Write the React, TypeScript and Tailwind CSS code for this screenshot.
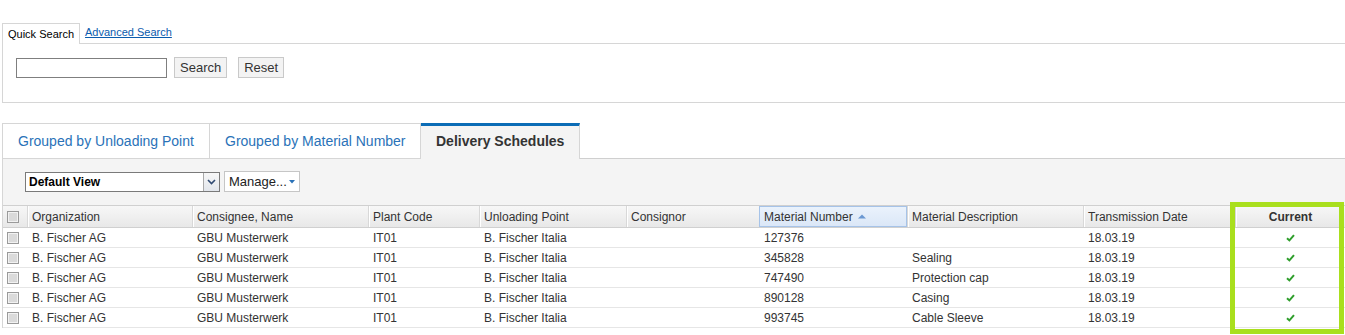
import React from 'react';

const rows = [
  { mat: '127376', desc: '' },
  { mat: '345828', desc: 'Sealing' },
  { mat: '747490', desc: 'Protection cap' },
  { mat: '890128', desc: 'Casing' },
  { mat: '993745', desc: 'Cable Sleeve' },
];

const cols = 'grid grid-cols-[24px_165px_176px_111px_147px_133px_148px_176px_152px_1fr]';

const Checkbox = () => (
  <span className="block w-[12px] h-[12px] border border-[#9a9a9a] bg-[#dadada] shadow-[inset_0_0_0_1px_#f2f2f2]" />
);

const Check = () => (
  <svg width="9" height="8" viewBox="0 0 9 8" className="block">
    <path d="M1 4.2 L3.4 6.4 L8 1.2" fill="none" stroke="#2f9e2c" strokeWidth="2" />
  </svg>
);

const HeadCell: React.FC<{ children?: React.ReactNode; className?: string }> = ({ children, className = '' }) => (
  <div className={`h-full border-l border-[#d8d8d8] shadow-[inset_1px_0_0_#ffffff] px-[4px] flex items-center truncate ${className}`}>
    {children}
  </div>
);

export default function App() {
  return (
    <div className="w-[1345px] h-[335px] overflow-hidden bg-white relative text-[#333] font-['Liberation_Sans',Arial,sans-serif]">
      {/* Search box */}
      <div className="pt-[23px] pl-[2px]">
        <div className="flex">
          <div className="h-[21px] border-x border-t border-[#d6d6d6] px-[5px] text-[11px] leading-[20px] text-black">
            Quick Search
          </div>
          <div className="flex-1 h-[21px] border-b border-[#d6d6d6] pl-[5px] text-[11px] leading-[19px]">
            <span className="text-[#0b5cad] underline">Advanced Search</span>
          </div>
        </div>
        <div className="h-[59px] border-l border-b border-[#d6d6d6] pt-[14px] pl-[13px] flex items-start">
          <input className="w-[151px] h-[20px] border border-[#7f7f7f] bg-white outline-none" />
          <button className="ml-[7px] -mt-px h-[21px] px-[5px] border border-[#c9c9c9] bg-[#f3f3f3] text-[13px] leading-[20px] text-[#333]">
            Search
          </button>
          <button className="ml-[11px] -mt-px h-[21px] px-[5px] border border-[#c9c9c9] bg-[#f3f3f3] text-[13px] leading-[20px] text-[#333]">
            Reset
          </button>
        </div>
      </div>

      {/* Result tabs */}
      <div className="mt-[20px] pl-[2px]">
        <div className="flex h-[36px] text-[14px]">
          <div className="w-[208px] border border-[#d6d6d6] pl-[15px] flex items-center text-[#2a72b8]">
            Grouped by Unloading Point
          </div>
          <div className="w-[211px] border-y border-r border-[#d6d6d6] pl-[15px] flex items-center text-[#2a72b8]">
            Grouped by Material Number
          </div>
          <div className="w-[159px] border-t-[3px] border-t-[#0b6cb6] border-r border-r-[#d6d6d6] bg-[#f4f4f4] pl-[15px] pb-[2px] flex items-center font-bold text-[#333]">
            Delivery Schedules
          </div>
          <div className="flex-1 border-b border-[#cfcfcf]" />
        </div>

        {/* Toolbar */}
        <div className="h-[46px] bg-[#f4f4f4] border-l border-[#d6d6d6] pt-[13px] pl-[22px] flex items-start">
          <div className="flex h-[20px] w-[195px] border border-[#7a7a7a] bg-white">
            <span className="flex-1 pl-[3px] text-[12px] leading-[19px] font-bold text-black">Default View</span>
            <span className="w-[16px] border-l border-[#a9a9a9] bg-gradient-to-b from-[#f7f7f7] to-[#e2e6ec] flex items-center justify-center">
              <svg width="9" height="6" viewBox="0 0 9 6">
                <path d="M1 1 L4.5 4.5 L8 1" fill="none" stroke="#2f4a72" strokeWidth="1.6" />
              </svg>
            </span>
          </div>
          <div className="ml-[4px] -mt-px h-[21px] w-[76px] border border-[#c6c6c6] bg-white flex items-center pl-[4px] text-[13px] text-[#222]">
            Manage...
            <svg width="6" height="4" viewBox="0 0 6 4" className="ml-[2px]">
              <path d="M0 0 H6 L3 3.5 Z" fill="#2a72b8" />
            </svg>
          </div>
        </div>

        {/* Table */}
        <div className="border-l border-[#d6d6d6] text-[12px]">
          <div className={`${cols} h-[23px] border-y border-[#d0d0d0] bg-gradient-to-b from-[#f7f7f7] to-[#e8e8e8]`}>
            <div className="flex items-center pl-[4px]">
              <Checkbox />
            </div>
            <HeadCell>Organization</HeadCell>
            <HeadCell>Consignee, Name</HeadCell>
            <HeadCell>Plant Code</HeadCell>
            <HeadCell>Unloading Point</HeadCell>
            <HeadCell>Consignor</HeadCell>
            <div className="h-full border border-[#a6c3e8] bg-gradient-to-b from-[#eaf2fc] to-[#dbe7f7] px-[4px] flex items-center">
              Material Number
              <svg width="8" height="5" viewBox="0 0 8 5" className="ml-[5px]">
                <path d="M0 4.5 L4 0.5 L8 4.5 Z" fill="#6b98d2" />
              </svg>
            </div>
            <HeadCell>Material Description</HeadCell>
            <HeadCell>Transmission Date</HeadCell>
            <HeadCell className="justify-center font-bold">Current</HeadCell>
          </div>
          {rows.map((r) => (
            <div key={r.mat} className={`${cols} h-[20px] border-b border-[#e6e6e6] bg-white leading-[21px]`}>
              <div className="flex items-center pl-[4px]">
                <Checkbox />
              </div>
              <div className="pl-[5px] truncate">B. Fischer AG</div>
              <div className="pl-[5px] truncate">GBU Musterwerk</div>
              <div className="pl-[5px] truncate">IT01</div>
              <div className="pl-[5px] truncate">B. Fischer Italia</div>
              <div className="pl-[5px] truncate" />
              <div className="pl-[5px] truncate">{r.mat}</div>
              <div className="pl-[5px] truncate">{r.desc}</div>
              <div className="pl-[5px] truncate">18.03.19</div>
              <div className="flex items-center justify-center">
                <Check />
              </div>
            </div>
          ))}
        </div>
      </div>

      {/* Highlight around the Current column */}
      <div className="absolute left-[1230px] top-[202px] w-[114px] h-[132px] border-[5px] border-[#a9df1d]" />
    </div>
  );
}
